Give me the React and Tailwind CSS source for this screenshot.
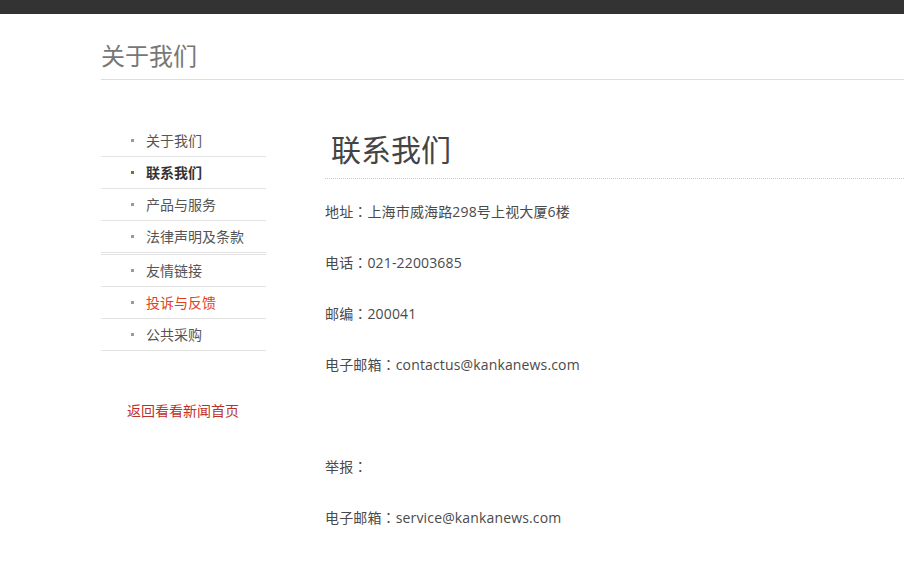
import { useState } from 'react'

const font = { fontFamily: '"Open Sans", "Noto Sans CJK SC", sans-serif' }
const colonFont = { fontFamily: '"Noto Sans CJK TC", "Noto Sans CJK SC", sans-serif' }

const navItems = [
  { label: '关于我们' },
  { label: '联系我们', active: true },
  { label: '产品与服务' },
  { label: '法律声明及条款' },
  { label: '友情链接', double: true },
  { label: '投诉与反馈', red: true },
  { label: '公共采购' }
]

const lines = [
  ['地址', '上海市威海路298号上视大厦6楼'],
  ['电话', '021-22003685'],
  ['邮编', '200041'],
  ['电子邮箱', 'contactus@kankanews.com'],
  null,
  ['举报', ''],
  ['电子邮箱', 'service@kankanews.com']
]

const App = () => {
  const [current] = useState('联系我们')

  return (
    <div className="min-h-[567px] bg-white" style={font}>
      {/* Top bar */}
      <div className="h-[14px] bg-[#333333]" />

      <div className="pl-[101px]">
        {/* Page title */}
        <div className="h-[66px] pt-[30px] border-b border-[#dddddd]">
          <h1 className="text-[24px] leading-[24px] text-[#777777]">关于我们</h1>
        </div>

        <div className="flex">
          {/* Sidebar */}
          <aside className="w-[165px] shrink-0 mt-[45px]">
            <ul>
              {navItems.map((item) => (
                <li
                  key={item.label}
                  className={`flex items-center pl-[30px] border-b border-[#e3e3e3] ${
                    item.double ? 'h-[33px] mt-[1px] border-t' : 'h-[32px]'
                  }`}
                >
                  <span
                    className={`w-[3px] h-[3px] ${
                      item.label === current ? 'bg-[#4f8a22]' : 'bg-[#9a9a9a]'
                    }`}
                  />
                  <span
                    className={`ml-[12px] text-[14px] leading-[20px] ${
                      item.label === current
                        ? 'font-bold text-[#333333]'
                        : item.red
                          ? 'text-[#e2401c]'
                          : 'text-[#555555]'
                    }`}
                  >
                    {item.label}
                  </span>
                </li>
              ))}
            </ul>
            <a href="#" className="block mt-[50px] pl-[26px] text-[14px] leading-[20px] text-[#c0302a]">
              返回看看新闻首页
            </a>
          </aside>

          {/* Content */}
          <main className="flex-1 ml-[59px] mt-[50px]">
            <div className="h-[49px] pl-[6px] border-b border-dotted border-[#c8c8c8]">
              <h2 className="text-[30px] leading-[40px] text-[#444444]">联系我们</h2>
            </div>
            <div className="flex flex-col gap-[27px] mt-[20px]">
              {lines.map((line, i) => (
                <p key={i} className="h-[24px] text-[14px] leading-[24px] text-[#4a4a4a] tracking-[0.15px]">
                  {line && (
                    <>
                      {line[0]}
                      <span style={colonFont}>：</span>
                      {line[1]}
                    </>
                  )}
                </p>
              ))}
            </div>
          </main>
        </div>
      </div>
    </div>
  )
}

export default App
